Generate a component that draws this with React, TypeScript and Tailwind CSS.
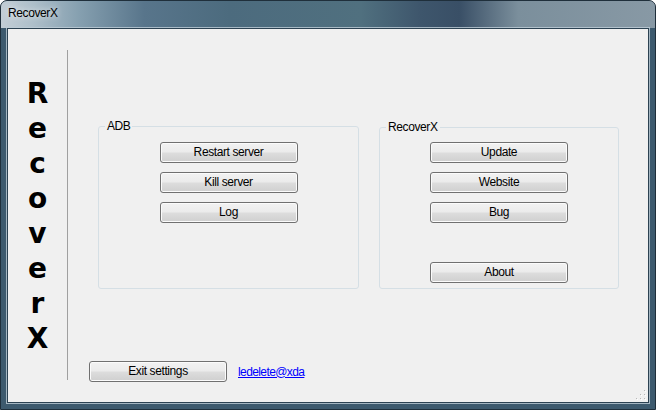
const ui = { fontFamily: '"Liberation Sans", Arial, sans-serif' };

function WinButton({ label, className = '' }: { label: string; className?: string }) {
  return (
    <button
      className={`h-[21px] w-[138px] rounded-[3px] border border-[#707070] bg-[linear-gradient(to_bottom,#f2f2f2_0%,#ebebeb_48%,#dddddd_52%,#cfcfcf_100%)] text-[12px] leading-[19px] tracking-[-0.4px] text-black shadow-[inset_0_0_0_1px_#fbfbfb] ${className}`}
      style={ui}
    >
      {label}
    </button>
  );
}

function GroupBox({
  title,
  className = '',
  children,
}: {
  title: string;
  className?: string;
  children: React.ReactNode;
}) {
  return (
    <div className={`relative rounded-[3px] border border-[#d5dfe5] ${className}`}>
      <span
        className="absolute -top-[8px] left-[6px] bg-[#f0f0f0] px-[2px] text-[12px] leading-[14px] tracking-[-0.4px] text-black"
        style={ui}
      >
        {title}
      </span>
      {children}
    </div>
  );
}

export default function App() {
  return (
    <div className="flex h-[410px] w-[656px] flex-col overflow-hidden rounded-t-[7px] border border-[#1f2f3b] bg-[#3d5a6e] shadow-[inset_0_1px_0_rgba(255,255,255,0.55)]">
      {/* title bar */}
      <div className="-mx-px -mt-px flex h-[28px] shrink-0 items-start rounded-t-[7px] border-t border-[#5d7282] bg-[linear-gradient(90deg,#c3ced6_0%,#aebfca_5%,#86a0b0_12%,#58758b_22%,#4c6b7e_35%,#50707f_55%,#3e566c_64%,#394f66_70%,#7b8f9c_79%,#8899a5_100%)] pl-[8px] pt-[5px]">
        <span
          className="text-[12px] leading-[15px] tracking-[-0.4px] text-black [text-shadow:0_0_6px_rgba(255,255,255,0.9)]"
          style={ui}
        >
          RecoverX
        </span>
      </div>

      {/* client area */}
      <div className="relative mx-[6px] mb-[6px] flex flex-1 border border-[#2c4252] bg-[#f0f0f0] shadow-[0_0_0_1px_rgba(190,205,215,0.8)]">
        <div className="mt-[21px] flex h-[330px] w-[60px] shrink-0 flex-col items-center border-r border-[#a0a0a0] pt-[26px]">
          {'RecoverX'.split('').map((ch, i) => (
            <span
              key={i}
              className="text-[28px] font-bold leading-[35px] text-black"
              style={{ fontFamily: '"DejaVu Sans", Verdana, sans-serif' }}
            >
              {ch}
            </span>
          ))}
        </div>

        <div className="flex flex-1 flex-col pt-[97px]">
          <div className="ml-[30px] flex items-start gap-[20px]">
            <GroupBox title="ADB" className="h-[163px] w-[261px]">
              <div className="flex flex-col items-center gap-[9px] pt-[15px]">
                <WinButton label="Restart server" />
                <WinButton label="Kill server" />
                <WinButton label="Log" />
              </div>
            </GroupBox>
            <GroupBox title="RecoverX" className="mt-px h-[162px] w-[240px]">
              <div className="flex flex-col items-center gap-[9px] pt-[14px]">
                <WinButton label="Update" />
                <WinButton label="Website" />
                <WinButton label="Bug" />
                <WinButton label="About" className="mt-[30px]" />
              </div>
            </GroupBox>
          </div>

          <div className="ml-[21px] mt-[72px] flex items-center">
            <WinButton label="Exit settings" />
            <a
              href="#"
              className="ml-[11px] text-[12px] leading-[14px] tracking-[-0.6px] text-[#0000ff] underline"
              style={ui}
            >
              ledelete@xda
            </a>
          </div>
        </div>

        {/* size grip */}
        <svg className="absolute bottom-[2px] right-[2px]" width="10" height="10" viewBox="0 0 10 10">
          {[
            [8, 0],
            [8, 4],
            [4, 4],
            [8, 8],
            [4, 8],
            [0, 8],
          ].map(([x, y], i) => (
            <g key={i}>
              <rect x={x + 1} y={y + 1} width="1" height="1" fill="#ffffff" />
              <rect x={x} y={y} width="1" height="1" fill="#b8b8b8" />
            </g>
          ))}
        </svg>
      </div>
    </div>
  );
}
